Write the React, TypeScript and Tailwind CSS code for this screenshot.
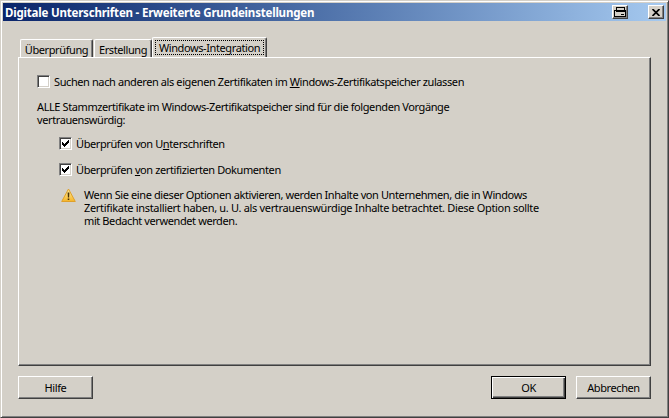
const bevel = 'border border-t-white border-l-white border-r-[#404040] border-b-[#404040] shadow-[inset_-1px_-1px_0_#808080]'

function Checkbox({ checked }: { checked?: boolean }) {
  return (
    <span className="box-border flex h-[13px] w-[13px] shrink-0 border border-t-[#808080] border-l-[#808080] border-r-white border-b-white bg-white shadow-[inset_1px_1px_0_#404040,inset_-1px_-1px_0_#d4d0c8]">
      {checked && (
        <svg width="11" height="11" viewBox="0 0 11 11" className="block">
          <path d="M2 4h1v1h1v1h1V5h1V4h1V3h1V2h1v3H8v1H7v1H6v1H5v1H4V8H3V7H2z" fill="#000" />
        </svg>
      )}
    </span>
  )
}

function Tab({ label, width }: { label: string; width: string }) {
  return (
    <div className={`box-border flex h-[18px] justify-center rounded-t-[2px] border border-b-0 border-t-white border-l-white border-r-[#404040] pt-[3px] leading-[13px] shadow-[inset_-1px_0_0_#808080] ${width}`}>
      {label}
    </div>
  )
}

function Button({ label, primary }: { label: string; primary?: boolean }) {
  return (
    <button
      className={`box-border flex h-[23px] w-[75px] items-center justify-center bg-[#d4d0c8] text-black ${
        primary ? 'border border-black shadow-[inset_1px_1px_0_#fff,inset_-1px_-1px_0_#404040,inset_-2px_-2px_0_#808080]' : bevel
      }`}
    >
      {label}
    </button>
  )
}

export default function App() {
  return (
    <div
      className="box-border flex h-[418px] w-[669px] flex-col overflow-hidden border border-t-[#d4d0c8] border-l-[#d4d0c8] border-r-[#404040] border-b-[#404040] bg-[#d4d0c8] text-[11px] leading-[13px] tracking-[-0.4px] text-black shadow-[inset_1px_1px_0_#fff,inset_-1px_-1px_0_#808080]"
      style={{ fontFamily: '"Noto Sans", sans-serif' }}
    >
      <div className="mx-[2px] mt-[2px] flex h-[18px] shrink-0 items-center justify-between bg-gradient-to-r from-[#0a246a] to-[#a6caf0] pl-[2px] pr-[2px] text-[11.5px] font-bold tracking-[-0.2px] text-white">
        <span className="whitespace-nowrap">Digitale Unterschriften - Erweiterte Grundeinstellungen</span>
        <div className="flex items-center">
          <span className={`mr-[20px] flex h-[14px] w-[16px] items-center justify-center bg-[#d4d0c8] ${bevel}`}>
            <svg width="12" height="10" viewBox="0 0 12 10" fill="none" stroke="#000" strokeWidth="1" shapeRendering="crispEdges">
              <path d="M2.5 3V0.5h8V4M0.5 3.5h11v6h-11zM1.5 4.5h9M1.5 2.5h1M7 7.5h3" />
            </svg>
          </span>
          <span className={`flex h-[14px] w-[16px] items-center justify-center bg-[#d4d0c8] ${bevel}`}>
            <svg width="8" height="7" viewBox="0 0 8 7" fill="none" stroke="#000" strokeWidth="1.7">
              <path d="M0.5 0l7 7M7.5 0l-7 7" />
            </svg>
          </span>
        </div>
      </div>

      <div className="flex min-h-0 flex-1 flex-col px-[17px] pb-[17px] pt-[16px]">
        <div className="ml-[2px] flex h-[20px] items-end">
          <Tab label="Überprüfung" width="w-[73px]" />
          <div className="w-px" />
          <Tab label="Erstellung" width="w-[58px]" />
          <div className="relative z-10 box-border flex h-[20px] w-[115px] justify-center rounded-t-[2px] border border-b-0 border-t-white border-l-white border-r-[#404040] bg-[#d4d0c8] pt-[2px] shadow-[inset_-1px_0_0_#808080]">
            <span className="h-[15px] whitespace-nowrap border border-dotted border-black px-[3px] leading-[13px]">Windows-Integration</span>
          </div>
        </div>

        <div className="box-border h-[309px] w-[633px] border border-t-white border-l-white border-r-[#404040] border-b-[#404040] pl-[18px] pt-[17px] shadow-[inset_-1px_-1px_0_#808080]">
          <div className="flex h-[13px] items-center gap-[4px] whitespace-nowrap">
            <Checkbox />
            <span>
              Suchen nach anderen als eigenen Zertifikaten im <u>W</u>indows-Zertifikatspeicher zulassen
            </span>
          </div>
          <p className="mt-[12px] w-[430px]">
            ALLE Stammzertifikate im Windows-Zertifikatspeicher sind für die folgenden Vorgänge
            <br />
            vertrauenswürdig:
          </p>
          <div className="ml-[22px] mt-[11px] flex h-[13px] items-center gap-[4px] whitespace-nowrap">
            <Checkbox checked />
            <span>
              Überprüfen von U<u>n</u>terschriften
            </span>
          </div>
          <div className="ml-[22px] mt-[13px] flex h-[13px] items-center gap-[4px] whitespace-nowrap">
            <Checkbox checked />
            <span>
              Überprüfen <u>v</u>on zertifizierten Dokumenten
            </span>
          </div>
          <div className="ml-[24px] mt-[12px] flex gap-[8px]">
            <svg width="15" height="15" viewBox="0 0 15 15" className="shrink-0">
              <defs>
                <linearGradient id="warn" x1="0" y1="0" x2="0" y2="1">
                  <stop offset="0" stopColor="#fff0a0" />
                  <stop offset="1" stopColor="#f5b428" />
                </linearGradient>
              </defs>
              <path d="M7.5 1L14.3 13.5H0.7z" fill="url(#warn)" stroke="#dfa02a" strokeWidth="1" strokeLinejoin="round" />
              <path d="M6.6 4.5h1.8l-.3 5h-1.2zM6.7 10.5h1.6v1.6H6.7z" fill="#4a3208" />
            </svg>
            <p className="w-[470px] whitespace-nowrap">
              Wenn Sie eine dieser Optionen aktivieren, werden Inhalte von Unternehmen, die in Windows
              <br />
              <span className="tracking-[-0.32px]">
                Zertifikate installiert haben, u. U. als vertrauenswürdige Inhalte betrachtet. Diese Option sollte
              </span>
              <br />
              mit Bedacht verwendet werden.
            </p>
          </div>
        </div>

        <div className="mt-[10px] flex items-start">
          <Button label="Hilfe" />
          <div className="flex-1" />
          <Button label="OK" primary />
          <div className="w-[10px]" />
          <Button label="Abbrechen" />
        </div>
      </div>
    </div>
  )
}
